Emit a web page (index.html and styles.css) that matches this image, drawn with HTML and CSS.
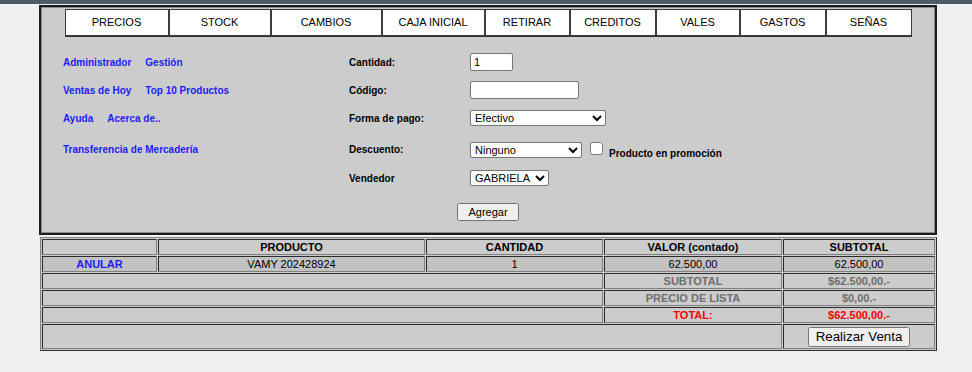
FILE: index.html
```html
<!doctype html>
<html lang='es'>
  <head>
    <title>Ventas</title>
    <meta charset='UTF-8'>
    <meta name='viewport' content='width=device-width, initial-scale=1'>
    <link rel="stylesheet" href="styles.css">
  </head>
  <body>
<div class=topbar></div>
<main class=page>
  <section class=panel>
    <nav class=menu>
      <a>PRECIOS</a>
      <a>STOCK</a>
      <a>CAMBIOS</a>
      <a>CAJA INICIAL</a>
      <a>RETIRAR</a>
      <a>CREDITOS</a>
      <a>VALES</a>
      <a>GASTOS</a>
      <a>SEÑAS</a>
    </nav>
    <form class=sale>
      <div class=links><a>Administrador</a><a>Gestión</a></div>
      <label class=lbl for=cantidad>Cantidad:</label>
      <div class=field><input id=cantidad class=qty type=text value=1></div>

      <div class=links><a>Ventas de Hoy</a><a>Top 10 Productos</a></div>
      <label class=lbl for=codigo>Código:</label>
      <div class=field><input id=codigo class=code type=text></div>

      <div class=links><a>Ayuda</a><a>Acerca de..</a></div>
      <label class=lbl for=pago>Forma de pago:</label>
      <div class=field>
        <select id=pago class=pay><option>Efectivo</option></select>
      </div>

      <div class=links><a>Transferencia de Mercadería</a></div>
      <label class=lbl for=descuento>Descuento:</label>
      <div class=field>
        <select id=descuento class=disc><option>Ninguno</option></select>
        <input id=promo type=checkbox class=promo>
        <label for=promo class=promo-lbl>Producto en promoción</label>
      </div>

      <div></div>
      <label class=lbl for=vendedor>Vendedor</label>
      <div class=field>
        <select id=vendedor class=seller><option>GABRIELA</option></select>
      </div>
    </form>
    <div class=actions>
      <button type=button class=add>Agregar</button>
    </div>
  </section>

  <table class=cart>
    <thead>
      <tr>
        <th class=c1></th>
        <th class=c2>PRODUCTO</th>
        <th class=c3>CANTIDAD</th>
        <th class=c4>VALOR (contado)</th>
        <th class=c5>SUBTOTAL</th>
      </tr>
    </thead>
    <tbody>
      <tr class=item>
        <td><a class=cancel>ANULAR</a></td>
        <td>VAMY 202428924</td>
        <td>1</td>
        <td>62.500,00</td>
        <td>62.500,00</td>
      </tr>
      <tr class=sum>
        <td colspan=3></td>
        <td>SUBTOTAL</td>
        <td>$62.500,00.-</td>
      </tr>
      <tr class=sum>
        <td colspan=3></td>
        <td>PRECIO DE LISTA</td>
        <td>$0,00.-</td>
      </tr>
      <tr class="sum total">
        <td colspan=3></td>
        <td>TOTAL:</td>
        <td>$62.500,00.-</td>
      </tr>
      <tr class=checkout>
        <td colspan=4></td>
        <td><button type=button class=sell>Realizar Venta</button></td>
      </tr>
    </tbody>
  </table>
</main>
  </body>
</html>
```

FILE: styles.css
```css
html, body {
  margin: 0;
  background: #f0f0f0;
  font-family: "Liberation Sans", Arial, Helvetica, sans-serif;
  font-size: 11px;
  color: #000;
}
.topbar {
  height: 4px;
  background: #4b5b67;
}
.page {
  width: 898px;
  margin: 1px 0 0 39px;
}

/* panel */
.panel {
  box-sizing: border-box;
  background: #cccccc;
  border: 2px solid #1c1c1c;
  box-shadow: inset 0 0 0 1px #8a8a8a;
  padding: 2px 0 12px;
}
.menu {
  width: 847px;
  margin: 0 auto;
  display: grid;
  grid-template-columns: 104px 102px 111px 103px 85px 86px 84px 86px 86px;
  border-right: 1px solid #333;
  border-bottom: 1px solid #333;
  box-sizing: border-box;
}
.menu a {
  background: #fff;
  border: 1px solid #3e3e3e;
  line-height: 25px;
  text-align: center;
  font-size: 11px;
  color: #000;
}

/* form */
.sale {
  margin: 11px 0 0;
  padding-left: 22px;
  display: grid;
  grid-template-columns: 286px 121px auto;
  grid-template-rows: 28px 28px 28px 35px 22px;
  align-items: center;
}
.links {
  display: flex;
  gap: 14px;
}
.links a, .cancel {
  color: #2020ff;
  font-weight: bold;
  font-size: 10px;
}
.cancel {
  font-size: 11px;
}
.lbl, .promo-lbl {
  font-weight: bold;
  font-size: 10px;
  line-height: 13px;
}
.field {
  display: flex;
  align-items: flex-start;
}
input[type=text], select {
  box-sizing: border-box;
  margin: 0;
  font-family: inherit;
  font-size: 11px;
  border: 1px solid #767676;
  border-radius: 2px;
  background: #fff;
  color: #000;
}
input[type=text] {
  padding: 0 3px;
}
.qty { width: 43px; height: 18px; }
.code { width: 109px; height: 18px; }
select { height: 16px; padding: 0; }
.pay { width: 136px; }
.disc { width: 112px; }
.seller { width: 79px; }
.promo {
  width: 13px;
  height: 13px;
  margin: 0 0 0 8px;
}
.promo-lbl {
  margin: 5px 0 -5px 6px;
}
.actions {
  margin-top: 14px;
  text-align: center;
}
.add {
  height: 18px;
  padding: 0 9px;
  font-family: inherit;
  font-size: 11px;
}

/* cart */
.cart {
  width: 897px;
  margin: 2px 0 0 1px;
  table-layout: fixed;
  border-collapse: separate;
  border-spacing: 1px;
  border: 1px outset #808080;
  background: #cccccc;
}
.cart th, .cart td {
  box-sizing: border-box;
  border: 1px inset #808080;
  padding: 0 1px;
  line-height: 14px;
  text-align: center;
  font-size: 11px;
  background: #cccccc;
}
.cart th { font-weight: bold; }
.c1 { width: 115px; }
.c2 { width: 267px; }
.c3 { width: 177px; }
.c4 { width: 178px; }
.c5 { width: 152px; }
.item td { background: #c2c2c2; }
.sum td {
  color: #6e6e6e;
  font-weight: bold;
}
.total td { color: #ff0000; }
.checkout td {
  height: 25px;
  padding: 1px;
}
.sell {
  width: 102px;
  height: 20px;
  padding: 0;
  font-family: inherit;
  font-size: 13.33px;
  vertical-align: middle;
}
```
